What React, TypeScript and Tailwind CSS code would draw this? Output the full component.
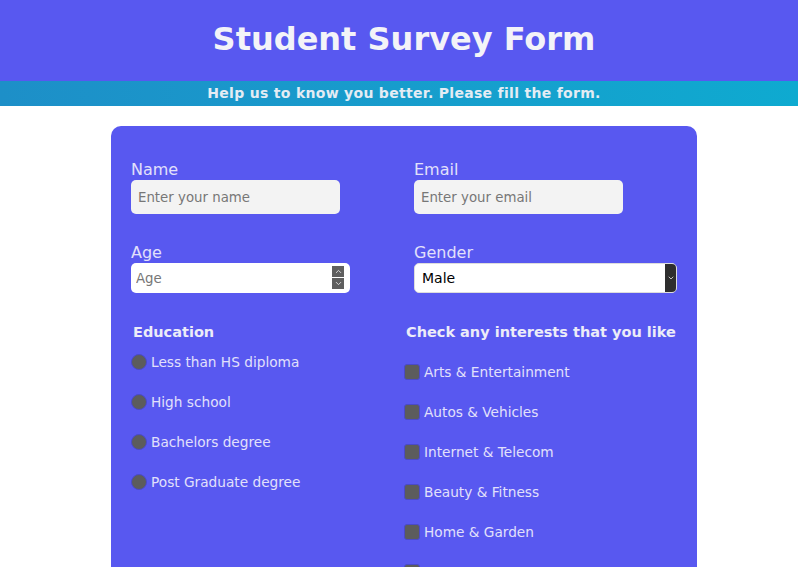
import { ChevronDown, ChevronUp } from "lucide-react";

const EDUCATION = [
  "Less than HS diploma",
  "High school",
  "Bachelors degree",
  "Post Graduate degree",
];

const INTERESTS = [
  "Arts & Entertainment",
  "Autos & Vehicles",
  "Internet & Telecom",
  "Beauty & Fitness",
  "Home & Garden",
  "Sports & Games",
];

export default function App() {
  return (
    <div className="min-h-[567px] bg-white font-['DejaVu_Sans',sans-serif]">
      <header className="bg-[#5858f0] h-[81px] pl-[10px] flex items-center justify-center">
        <h1 className="text-[32px] font-bold text-[#f3f3f8] leading-none -mt-1">
          Student Survey Form
        </h1>
      </header>
      <div className="h-[25px] pl-[10px] bg-gradient-to-r from-[#1d8fc8] to-[#0eaad0] flex items-center justify-center">
        <p className="text-[14px] font-bold text-[#e4ecf4] tracking-[0.3px]">
          Help us to know you better. Please fill the form.
        </p>
      </div>

      <div className="pl-[10px]">
        <form className="mx-auto mt-[20px] w-[586px] bg-[#5858f0] rounded-[10px] px-[20px] pt-[34px] pb-10 text-[#e2e0fb]">
          <div className="grid grid-cols-[283px_1fr] gap-y-[29px]">
            <label className="flex flex-col">
              <span className="text-[16px] leading-[20px]">Name</span>
              <input
                type="text"
                placeholder="Enter your name"
                className="w-[209px] h-[34px] rounded-[5px] bg-[#f3f3f3] px-[7px] text-[13.33px] text-black placeholder:text-[#777] outline-none"
              />
            </label>
            <label className="flex flex-col">
              <span className="text-[16px] leading-[20px]">Email</span>
              <input
                type="text"
                placeholder="Enter your email"
                className="w-[209px] h-[34px] rounded-[5px] bg-[#f3f3f3] px-[7px] text-[13.33px] text-black placeholder:text-[#777] outline-none"
              />
            </label>

            <label className="flex flex-col">
              <span className="text-[16px] leading-[20px]">Age</span>
              <div className="relative w-[219px] h-[30px]">
                <input
                  type="text"
                  placeholder="Age"
                  className="w-full h-full rounded-[5px] bg-white px-[5px] text-[13.33px] text-black placeholder:text-[#777] outline-none"
                />
                <div className="absolute right-[6px] top-[3px] flex flex-col gap-[1px]">
                  <span className="w-[12px] h-[11px] bg-[#5f5f5f] flex items-center justify-center">
                    <ChevronUp size={9} strokeWidth={2.5} color="#ddd" />
                  </span>
                  <span className="w-[12px] h-[11px] bg-[#5f5f5f] flex items-center justify-center">
                    <ChevronDown size={9} strokeWidth={2.5} color="#ddd" />
                  </span>
                </div>
              </div>
            </label>
            <label className="flex flex-col">
              <span className="text-[16px] leading-[20px]">Gender</span>
              <div className="w-[263px] h-[30px] rounded-[5px] bg-white flex items-stretch overflow-hidden border border-[#ddd]">
                <span className="flex-1 flex items-center pl-[7px] text-[14px] text-black">Male</span>
                <span className="w-[11px] bg-[#2e2e2e] flex items-center justify-center">
                  <ChevronDown size={8} strokeWidth={2.5} color="#ddd" />
                </span>
              </div>
            </label>
          </div>

          <div className="grid grid-cols-[273px_1fr] mt-[29px]">
            <div>
              <h3 className="ml-[2px] text-[14.5px] font-bold text-[#ececf8] leading-[20px]">Education</h3>
              <div className="mt-[11px] flex flex-col gap-[22px]">
                {EDUCATION.map((e) => (
                  <div key={e} className="flex items-center h-[18px]">
                    <span className="w-[16px] h-[16px] rounded-full bg-[#5c5c5c] border border-[#4a4ac8]" />
                    <span className="ml-[4px] text-[13.7px] leading-[18px]">{e}</span>
                  </div>
                ))}
              </div>
            </div>
            <div>
              <h3 className="ml-[2px] text-[14.5px] font-bold text-[#ececf8] leading-[20px] whitespace-nowrap">
                Check any interests that you like
              </h3>
              <div className="mt-[21px] flex flex-col gap-[22px]">
                {INTERESTS.map((i) => (
                  <div key={i} className="flex items-center h-[18px]">
                    <span className="w-[16px] h-[16px] rounded-[3px] bg-[#5c5c5c] border border-[#4a4ac8]" />
                    <span className="ml-[4px] text-[13.7px] leading-[18px]">{i}</span>
                  </div>
                ))}
              </div>
            </div>
          </div>
        </form>
      </div>
    </div>
  );
}
